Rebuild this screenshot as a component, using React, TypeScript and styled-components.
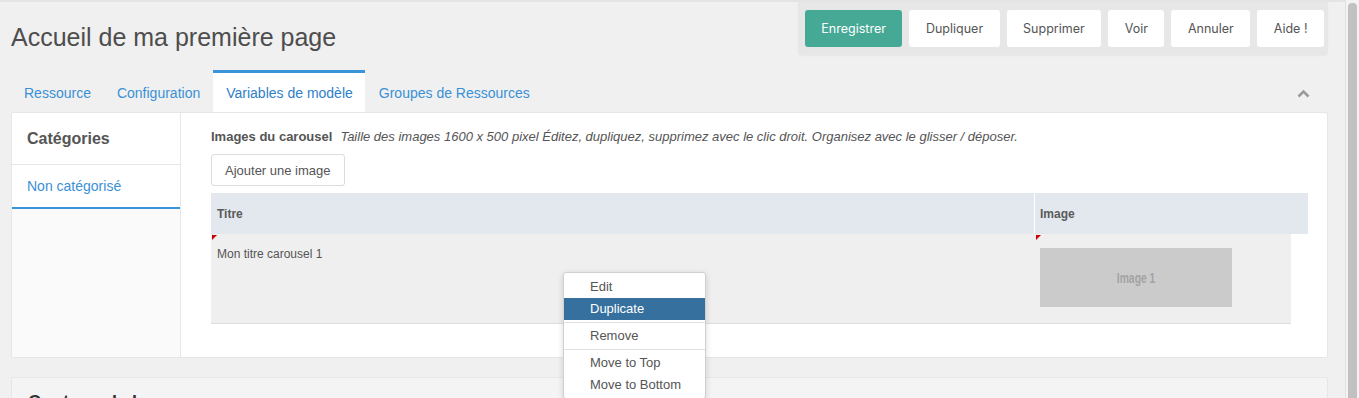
import React from "react";
import styled, { createGlobalStyle } from "styled-components";

const actions = ["Enregistrer", "Dupliquer", "Supprimer", "Voir", "Annuler", "Aide !"];
const tabs = ["Ressource", "Configuration", "Variables de modèle", "Groupes de Ressources"];
const menuItems: (string | null)[] = ["Edit", "Duplicate", null, "Remove", null, "Move to Top", "Move to Bottom"];

const App: React.FC = () => (
  <>
    <GlobalStyle />
    <Viewport>
      <Main>
        <Header>
          <Title>Accueil de ma première page</Title>
          <ActionBar>
            {actions.map((label, i) => (
              <ActionButton key={label} $primary={i === 0}>
                {label}
              </ActionButton>
            ))}
          </ActionBar>
        </Header>

        <TabBar>
          {tabs.map((t, i) => (
            <Tab key={t} $active={i === 2}>
              {t}
            </Tab>
          ))}
          <Collapse>
            <svg width="13" height="9" viewBox="0 0 13 9">
              <path d="M1.5 7.5 L6.5 2.5 L11.5 7.5" fill="none" stroke="#9a9a9a" strokeWidth="2.6" />
            </svg>
          </Collapse>
        </TabBar>

        <Panel>
          <Sidebar>
            <SidebarHead>Catégories</SidebarHead>
            <SidebarItem>Non catégorisé</SidebarItem>
          </Sidebar>
          <Content>
            <FieldLine>
              <FieldLabel>Images du carousel</FieldLabel>
              <FieldHint>
                Taille des images 1600 x 500 pixel Éditez, dupliquez, supprimez avec le clic droit. Organisez avec le
                glisser / déposer.
              </FieldHint>
            </FieldLine>
            <AddButton>Ajouter une image</AddButton>
            <Grid>
              <GridHead>
                <HeadCell $width={823}>Titre</HeadCell>
                <HeadCell $width={274} $pad={5}>
                  Image
                </HeadCell>
              </GridHead>
              <GridRow>
                <Cell $width={824}>
                  <DirtyMark />
                  Mon titre carousel 1
                </Cell>
                <Cell $width={256} $pad={5}>
                  <DirtyMark />
                  <Thumb>
                    <ThumbLabel>Image 1</ThumbLabel>
                  </Thumb>
                </Cell>
              </GridRow>
            </Grid>
          </Content>
        </Panel>

        <Section>
          <SectionTitle>Contenu de la page</SectionTitle>
        </Section>
      </Main>

      <ScrollTrack>
        <ScrollThumb />
      </ScrollTrack>

      <ContextMenu>
        {menuItems.map((item, i) =>
          item === null ? (
            <MenuDivider key={i} />
          ) : (
            <MenuItem key={i} $active={item === "Duplicate"}>
              {item}
            </MenuItem>
          )
        )}
      </ContextMenu>
    </Viewport>
  </>
);

const GlobalStyle = createGlobalStyle`
  * { box-sizing: border-box; }
  body {
    margin: 0;
    background: #f0f0f0;
    font-family: "Liberation Sans", Arial, sans-serif;
    color: #555;
  }
`;

const Viewport = styled.div`
  position: relative;
  display: flex;
  width: 1359px;
  height: 398px;
  overflow: hidden;
`;

const Main = styled.div`
  flex: 1;
  padding: 0 17px 0 11px;
  border-top: 2px solid #e4e4e4;
`;

const Header = styled.div`
  display: flex;
  justify-content: space-between;
  align-items: flex-start;
  height: 68px;
`;

const Title = styled.h1`
  margin: 0;
  padding-top: 20px;
  font-size: 25px;
  line-height: 30px;
  font-weight: 400;
  color: #4d4d4d;
`;

const ActionBar = styled.div`
  display: flex;
  gap: 7px;
  padding: 8px 4px 8px 7px;
  background: #e7e7e7;
  border-radius: 0 0 4px 4px;
  box-shadow: 0 1px 2px rgba(0, 0, 0, 0.04);
`;

const ActionButton = styled.button<{ $primary?: boolean }>`
  height: 37px;
  padding: 0 16.5px;
  border: none;
  border-radius: 3px;
  font-family: "Inter", "Liberation Sans", sans-serif;
  font-size: 12.5px;
  color: ${({ $primary }) => ($primary ? "#fff" : "#555")};
  background: ${({ $primary }) => ($primary ? "#46a996" : "#fff")};
`;

const TabBar = styled.div`
  display: flex;
  height: 42px;
`;

const Tab = styled.div<{ $active?: boolean }>`
  display: flex;
  align-items: center;
  padding: 0 12px 0 13px;
  margin-right: 1px;
  font-size: 14px;
  color: ${({ $active }) => ($active ? "#2f80c8" : "#3a90d6")};
  background: ${({ $active }) => ($active ? "#fff" : "transparent")};
  border-top: 3px solid ${({ $active }) => ($active ? "#3a94d8" : "transparent")};
`;

const Collapse = styled.div`
  margin-left: auto;
  padding: 14px 18px 0 0;
`;

const Panel = styled.div`
  display: flex;
  height: 246px;
  background: #fff;
  border: 1px solid #e6e6e6;
  border-radius: 2px;
`;

const Sidebar = styled.div`
  width: 169px;
  background: #fafafa;
  border-right: 1px solid #e6e6e6;
`;

const SidebarHead = styled.div`
  display: flex;
  align-items: center;
  height: 52px;
  padding-left: 15px;
  background: #fff;
  border-bottom: 1px solid #e6e6e6;
  font-size: 16px;
  font-weight: 700;
  color: #555;
`;

const SidebarItem = styled.div`
  display: flex;
  align-items: center;
  height: 44px;
  padding-left: 15px;
  background: #fff;
  border-bottom: 2px solid #3a94d8;
  font-size: 14px;
  color: #3a90d6;
`;

const Content = styled.div`
  flex: 1;
  padding: 16px 0 0 30px;
`;

const FieldLine = styled.div`
  display: flex;
  align-items: baseline;
  gap: 8px;
  line-height: 15px;
`;

const FieldLabel = styled.span`
  font-size: 13px;
  font-weight: 700;
  color: #555;
`;

const FieldHint = styled.span`
  font-size: 13px;
  font-style: italic;
  color: #555;
`;

const AddButton = styled.button`
  display: block;
  margin-top: 10px;
  height: 32px;
  padding: 0 13px;
  background: #fff;
  border: 1px solid #dcdcdc;
  border-radius: 3px;
  font-family: "Liberation Sans", Arial, sans-serif;
  font-size: 13px;
  color: #555;
`;

const Grid = styled.div`
  margin-top: 7px;
`;

const GridHead = styled.div`
  display: flex;
  width: 1097px;
  height: 41px;
  background: #e3e8ef;
`;

const HeadCell = styled.div<{ $width: number; $pad?: number }>`
  display: flex;
  align-items: center;
  width: ${({ $width }) => $width}px;
  padding-left: ${({ $pad }) => $pad ?? 6}px;
  font-size: 12px;
  font-weight: 700;
  color: #5a5a5a;
  & + & {
    border-left: 1px solid #fff;
  }
`;

const GridRow = styled.div`
  display: flex;
  width: 1080px;
  height: 90px;
  background: #efefef;
  border-bottom: 1px solid #dedede;
`;

const Cell = styled.div<{ $width: number; $pad?: number }>`
  position: relative;
  width: ${({ $width }) => $width}px;
  padding: ${({ $pad }) => ($pad ? `14px ${$pad}px` : "12px 6px")};
  font-size: 12px;
  line-height: 16px;
  color: #555;
`;

const DirtyMark = styled.span`
  position: absolute;
  top: 1px;
  left: 1px;
  width: 0;
  height: 0;
  border-top: 5px solid #c00;
  border-right: 5px solid transparent;
`;

const Thumb = styled.div`
  display: flex;
  align-items: center;
  justify-content: center;
  width: 192px;
  height: 59px;
  background: #cbcbcb;
`;

const ThumbLabel = styled.span`
  display: inline-block;
  transform: scaleX(0.74);
  font-family: "Liberation Sans", sans-serif;
  font-size: 14px;
  font-weight: 700;
  color: #a3a3a3;
`;

const Section = styled.div`
  margin-top: 19px;
  padding: 14px 16px;
  background: #f4f4f4;
  border: 1px solid #e6e6e6;
  border-radius: 2px;
`;

const SectionTitle = styled.h2`
  margin: 0;
  font-size: 18px;
  font-weight: 700;
  color: #333;
`;

const ScrollTrack = styled.div`
  width: 14px;
  padding: 3px 2px 0 2px;
  background: #f3f3f3;
  border-left: 1px solid #e2e2e2;
`;

const ScrollThumb = styled.div`
  height: 100%;
  background: #c1c1c1;
  border-radius: 4px 4px 0 0;
`;

const ContextMenu = styled.div`
  position: absolute;
  left: 563px;
  top: 272px;
  width: 143px;
  padding: 3px 0 2px;
  background: #fff;
  border: 1px solid #d0d0d0;
  border-radius: 3px;
  box-shadow: 0 2px 6px rgba(0, 0, 0, 0.15);
`;

const MenuItem = styled.div<{ $active?: boolean }>`
  height: 22px;
  line-height: 22px;
  padding-left: 26px;
  font-size: 13px;
  color: ${({ $active }) => ($active ? "#fff" : "#555")};
  background: ${({ $active }) => ($active ? "#36709e" : "transparent")};
`;

const MenuDivider = styled.div`
  height: 1px;
  margin: 2px 0;
  background: #e2e2e2;
`;

export default App;
